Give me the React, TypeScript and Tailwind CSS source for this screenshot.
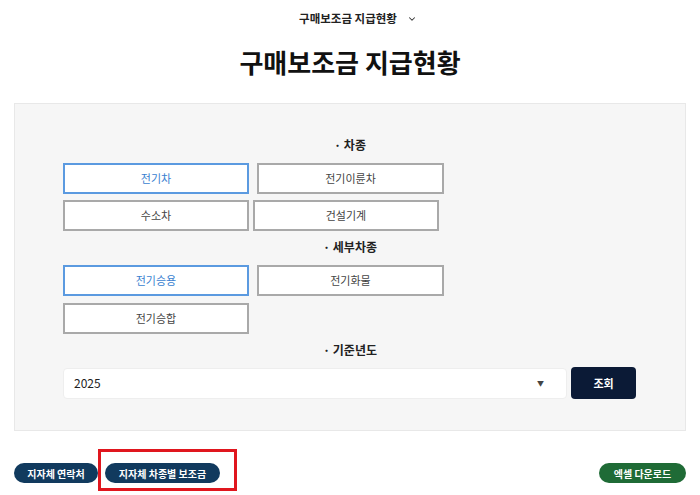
import { ChevronDown } from "lucide-react";

const OptionButton = ({ label, active = false, className = "" }: { label: string; active?: boolean; className?: string }) => {
  return (
    <button
      className={
        "h-[31px] w-[186px] bg-white text-[11px] " +
        (active ? "border-2 border-[#5b9ae0] text-[#3a7fd0]" : "border-2 border-[#a9a9a9] text-[#444]") +
        " " +
        className
      }
    >
      {label}
    </button>
  );
};

const SectionLabel = ({ text }: { text: string }) => {
  return <p className="-ml-[48px] text-center text-[12px] font-bold text-[#222] leading-[16px]">· {text}</p>;
};

const App = () => {
  return (
    <main className="relative w-[700px] h-[495px] bg-white font-['Noto_Sans_CJK_KR','Noto_Sans',sans-serif] text-[#111]">
      <div className="h-[38px] flex items-center justify-center pl-[16px] gap-[10px]">
        <span className="text-[11.5px] font-bold text-[#222]">구매보조금 지급현황</span>
        <ChevronDown size={10} strokeWidth={2.5} className="text-[#333]" />
      </div>
      <h1 className="text-center text-[26px] font-bold leading-[36px] mt-[6px]">구매보조금 지급현황</h1>

      <section className="mx-[14px] mt-[23px] h-[328px] bg-[#f6f6f6] border border-[#e8e8e8] pl-[48px] pt-[33px]">
        <SectionLabel text="차종" />
        <div className="flex gap-[8px] mt-[10px]">
          <OptionButton label="전기차" active />
          <OptionButton label="전기이륜차" className="w-[187px]" />
        </div>
        <div className="flex gap-[4px] mt-[6px]">
          <OptionButton label="수소차" />
          <OptionButton label="건설기계" />
        </div>
        <div className="mt-[8px]">
          <SectionLabel text="세부차종" />
        </div>
        <div className="flex gap-[8px] mt-[10px]">
          <OptionButton label="전기승용" active />
          <OptionButton label="전기화물" className="w-[187px]" />
        </div>
        <div className="flex mt-[7px]">
          <OptionButton label="전기승합" />
        </div>
        <div className="mt-[8px]">
          <SectionLabel text="기준년도" />
        </div>
        <div className="flex items-center gap-[4px] mt-[9px]">
          <div className="h-[31px] w-[504px] bg-white rounded-[4px] border border-[#eeeeee] flex items-center justify-between pl-[10px] pr-[22px]">
            <span className="text-[12px] text-[#222]">2025</span>
            <span className="text-[7px] text-[#444]">▼</span>
          </div>
          <button className="h-[32px] w-[65px] rounded-[4px] bg-[#0b1a36] text-white text-[11px] font-bold">조회</button>
        </div>
      </section>

      <div className="mx-[14px] mt-[32px] flex items-center justify-between">
        <div className="flex gap-[7px]">
          <button className="h-[20px] w-[84px] rounded-full bg-[#113a5e] text-white text-[10px] font-bold">지자체 연락처</button>
          <button className="h-[20px] w-[115px] rounded-full bg-[#113a5e] text-white text-[10px] font-bold">지자체 차종별 보조금</button>
        </div>
        <button className="h-[20px] w-[87px] rounded-full bg-[#1f6b36] text-white text-[10px] font-bold">엑셀 다운로드</button>
      </div>

      <div className="absolute left-[98px] top-[449px] w-[139px] h-[42px] border-[3px] border-[#e0161e]" />
    </main>
  );
};

export default App;
